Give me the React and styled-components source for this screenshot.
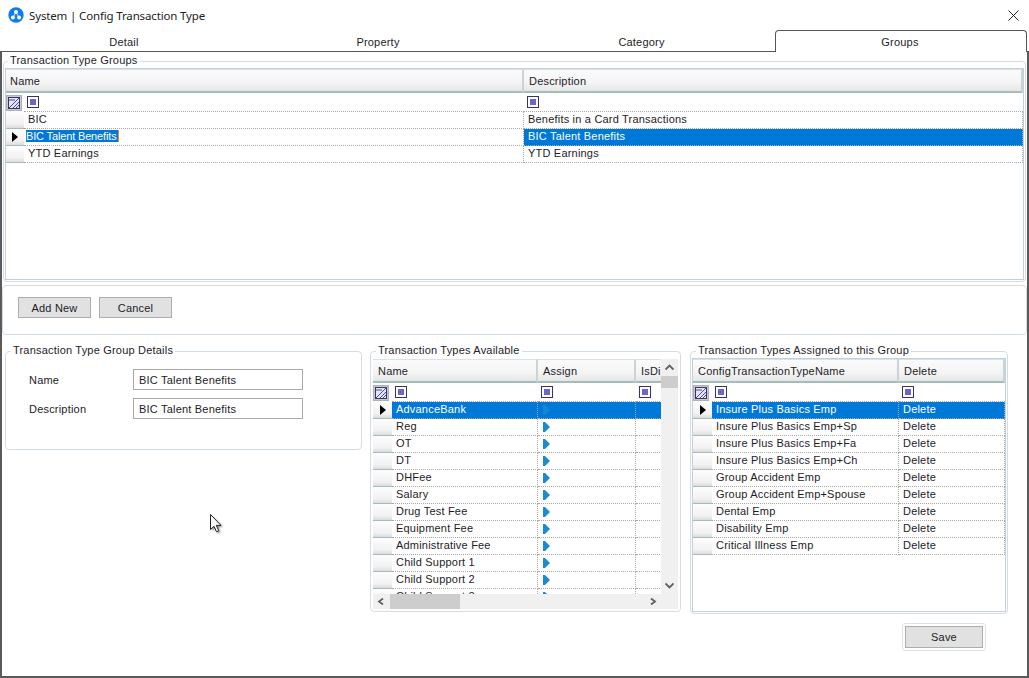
import React from "react";
import styled, { createGlobalStyle } from "styled-components";

const Global = createGlobalStyle`
  html, body { margin: 0; padding: 0; background: #fff; }
  * { box-sizing: border-box; }
  #root { width: 1029px; height: 678px; overflow: hidden; }
`;

const Page = styled.div`
  position: relative;
  width: 1029px;
  height: 678px;
  display: flex;
  flex-direction: column;
  background: #fff;
  overflow: hidden;
  font-family: "Liberation Sans", Arial, sans-serif;
  font-size: 11px;
  letter-spacing: 0.2px;
  color: #1c1c28;
`;
const TitleBar = styled.div`
  height: 30px;
  flex: none;
  display: flex;
  align-items: center;
  padding: 0 10px 0 8px;
  gap: 5px;
`;
const TitleText = styled.span`
  flex: 1;
  font-family: "Noto Sans", sans-serif;
  font-size: 11.5px;
  letter-spacing: -0.15px;
  color: #222;
`;
const TabStrip = styled.div`
  height: 22px;
  flex: none;
  display: grid;
  grid-template-columns: 248px 260px 267px 252px 2px;
`;
const Tab = styled.div`
  display: flex;
  align-items: center;
  justify-content: center;
  padding: ${(p) => (p.$active ? "0 2px 0 0" : "2px 0 0 0")};
  border-bottom: ${(p) => (p.$active ? "none" : "1.5px solid #555")};
  ${(p) =>
    p.$active &&
    `border: 1px solid #555; border-bottom: none; border-radius: 4px 4px 0 0; background:#fff;`}
`;
const TabEnd = styled.div`
  border-bottom: 1.5px solid #555;
`;
const Body = styled.div`
  flex: 1;
  display: flex;
  flex-direction: column;
  border-left: 2px solid #5a5a5a;
  border-right: 2px solid #5a5a5a;
  border-bottom: 2px solid #5a5a5a;
  padding-top: 9px;
`;
const Field = styled.div`
  position: relative;
  flex: none;
  width: ${(p) => p.$w};
  height: ${(p) => p.$h};
  margin: ${(p) => p.$m || 0};
  padding: ${(p) => p.$p || "6px 1px 1px 1px"};
  border: 1.5px solid #d3dde5;
  border-radius: 4px;
  display: flex;
`;
const Legend = styled.span`
  position: absolute;
  left: ${(p) => p.$left || "5px"};
  top: -8px;
  padding: 0 2px 0 2px;
  background: #fff;
  line-height: 13px;
  white-space: nowrap;
`;
const ButtonBar = styled.div`
  flex: none;
  height: 50px;
  margin-top: 3px;
  padding: 11px 0 0 15px;
  display: flex;
  gap: 8px;
  border: 1.5px solid #d3dde5;
  border-radius: 4px;
  align-items: flex-start;
`;
const Btn = styled.button`
  width: 73px;
  height: 21px;
  padding: 0;
  background: #e1e1e1;
  border: 1px solid #adadad;
  font: inherit;
  letter-spacing: inherit;
  color: inherit;
`;
const Lower = styled.div`
  display: flex;
  flex: none;
  margin-top: 16px;
  padding-left: 3px;
  gap: 8px;
  align-items: flex-start;
`;
const RightColumn = styled.div`
  display: flex;
  flex-direction: column;
  align-items: flex-end;
  margin-left: 1px;
`;
const SaveFrame = styled.div`
  margin: 9px 22px 0 0;
  padding: 2px;
  border: 1.5px solid #dbe3ea;
  border-radius: 3px;
`;
const SaveBtn = styled(Btn)`
  display: block;
  width: 78px;
  height: 22px;
`;
const Form = styled.div`
  display: grid;
  grid-template-columns: 104px 170px;
  grid-auto-rows: 21px;
  row-gap: 8px;
  padding: 17px 0 0 23px;
  align-items: center;
`;
const TextBox = styled.div`
  height: 21px;
  border: 1px solid #a9a9a9;
  padding-left: 5px;
  display: flex;
  align-items: center;
`;

const GridFrame = styled.div`
  flex: 1;
  min-width: 0;
  display: flex;
  border: 1px solid ${(p) => (p.$plain ? "#c2d0da" : "transparent")};
  overflow: hidden;
`;
const GridMain = styled.div`
  flex: 1;
  min-width: 0;
  display: flex;
  flex-direction: column;
`;
const Viewport = styled.div`
  flex: 1;
  min-height: 0;
  overflow: hidden;
`;
const Row = styled.div`
  display: grid;
  grid-template-columns: ${(p) => p.$cols};
  height: ${(p) => p.$h || "17px"};
`;
const HeaderCell = styled.div`
  grid-column: ${(p) => (p.$span ? "span 2" : "auto")};
  display: flex;
  align-items: center;
  padding-left: ${(p) => p.$pad || "5px"};
  overflow: hidden;
  white-space: nowrap;
  background: linear-gradient(#fbfbfb, #f4f4f4 60%, #e6e6e6);
  border-top: 1px solid #d9e2e6;
  border-bottom: 2px solid #a3bcbc;
  border-right: 2px solid #c9d4d6;
`;
const Selector = styled.div`
  display: flex;
  align-items: center;
  justify-content: center;
  background: linear-gradient(#fdfdfd, #f1f1f1 75%, #dcdcdc);
  border-bottom: 1px solid #a3bcbc;
`;
const CornerCell = styled.div`
  display: flex;
  align-items: center;
  justify-content: flex-start;
`;
const Cell = styled.div`
  display: flex;
  align-items: center;
  padding: 0 0 3px 4px;
  overflow: hidden;
  white-space: nowrap;
  border-bottom: 1px dotted #a8a8a8;
  border-right: 1px dotted #a8a8a8;
  background: ${(p) => (p.$selected ? "#0078d7" : "#fff")};
  color: ${(p) => (p.$selected ? "#fff" : "inherit")};
`;
const EditText = styled.span`
  background: #0078d7;
  color: #fff;
  padding: 0 1px 0 0;
  margin-left: -2px;
  letter-spacing: -0.15px;
  border-right: 1px solid #e08a3c;
`;
const FilterCell = styled.div`
  display: flex;
  align-items: center;
  padding-left: 3px;
  border-bottom: 1px dotted #a8a8a8;
  background: #fff;
`;
const FilterBox = styled.span`
  width: 12px;
  height: 12px;
  border: 1px solid #33336e;
  display: flex;
  align-items: center;
  justify-content: center;
  &::after {
    content: "";
    width: 6px;
    height: 6px;
    background: #6b66cc;
  }
`;
const VScroll = styled.div`
  flex: none;
  width: 17px;
  background: #f0f0f0;
  display: flex;
  flex-direction: column;
  align-items: center;
  padding-bottom: 15px;
`;
const VThumb = styled.div`
  width: 100%;
  height: 12px;
  background: #cdcdcd;
`;
const Spacer = styled.div`
  flex: 1;
`;
const HScroll = styled.div`
  flex: none;
  height: 15px;
  background: #f0f0f0;
  display: flex;
  align-items: center;
`;
const HThumb = styled.div`
  width: 70px;
  height: 100%;
  background: #cdcdcd;
`;
const ArrowBox = styled.div`
  flex: none;
  height: 17px;
  width: 17px;
  display: flex;
  align-items: center;
  justify-content: center;
`;
const AssignSvg = styled.svg`
  margin: 3px 0 0 1px;
`;
const Cursor = styled.svg`
  position: absolute;
  left: 209px;
  top: 513px;
`;

const Logo = () => (
  <svg width="16" height="16" viewBox="0 0 16 16">
    <circle cx="8" cy="8" r="7.7" fill="#0e7ceb" />
    <circle cx="8" cy="5" r="2" fill="#fff" />
    <circle cx="4.9" cy="10.6" r="2" fill="#fff" />
    <circle cx="11.1" cy="10.6" r="2" fill="#fff" />
    <path d="M8 5L5 10.600M8 5l3 5.600" stroke="#fff" strokeWidth="0.8" />
  </svg>
);
const CloseIcon = () => (
  <svg width="11" height="11" viewBox="0 0 11 11">
    <path d="M.5.5l10 10M10.5.5l-10 10" stroke="#222" strokeWidth="1" fill="none" />
  </svg>
);
const FilterIcon = () => (
  <svg width="16" height="16" viewBox="0 0 16 16">
    <rect x=".75" y=".75" width="14.5" height="14.500" fill="#e4e4ee" stroke="#b0b0b0" strokeWidth="1.5" />
    <rect x="2.500" y="2.500" width="11" height="11" fill="#e6e6f6" stroke="#33336e" />
    <path d="M3 13L13 3M7 13l6-6M10 13l3-3M3 5h6" stroke="#4a4a9a" fill="none" />
  </svg>
);
const RowArrow = () => (
  <svg width="6" height="10" viewBox="0 0 6 10">
    <path d="M0 0l6 5-6 5z" fill="#000" />
  </svg>
);
const AssignArrow = ({ dim }) => (
  <AssignSvg width="7" height="10" viewBox="0 0 7 10">
    <path d="M0 0h2l5 5-5 5H0z" fill={dim ? "#1488cf" : "#1a8ccb"} />
  </AssignSvg>
);
const Chevron = ({ d }) => (
  <svg width="9" height="7" viewBox="0 0 9 7">
    <path d={d} stroke="#606060" strokeWidth="1.8" fill="none" />
  </svg>
);

function DataGrid({ cols, headers, rows, selected, edit, filters, firstPad, headH = "24px", filterH = "19px" }) {
  return (
    <Viewport>
      <Row $cols={cols} $h={headH}>
        {headers.map((h, i) => (
          <HeaderCell key={h} $span={i === 0} $pad={i === 0 ? firstPad : undefined}>
            {h}
          </HeaderCell>
        ))}
      </Row>
      <Row $cols={cols} $h={filterH}>
        <CornerCell>
          <FilterIcon />
        </CornerCell>
        {filters.map((f) => (
          <FilterCell key={f}>
            <FilterBox />
          </FilterCell>
        ))}
      </Row>
      {rows.map((r, i) => (
        <Row $cols={cols} key={r[0] + i}>
          <Selector>{i === selected && <RowArrow />}</Selector>
          {r.map((c, j) => {
            const isSel = i === selected && !(edit && j === 0);
            return (
              <Cell key={j} $selected={isSel}>
                {c === ">" ? (
                  <AssignArrow dim={isSel} />
                ) : i === selected && edit && j === 0 ? (
                  <EditText>{c}</EditText>
                ) : (
                  c
                )}
              </Cell>
            );
          })}
        </Row>
      ))}
    </Viewport>
  );
}

const groups = [
  ["BIC", "Benefits in a Card Transactions"],
  ["BIC Talent Benefits", "BIC Talent Benefits"],
  ["YTD Earnings", "YTD Earnings"],
];
const available = [
  "AdvanceBank", "Reg", "OT", "DT", "DHFee", "Salary", "Drug Test Fee", "Equipment Fee",
  "Administrative Fee", "Child Support 1", "Child Support 2", "Child Support 3",
].map((n) => [n, ">", ""]);
const assigned = [
  "Insure Plus Basics Emp", "Insure Plus Basics Emp+Sp", "Insure Plus Basics Emp+Fa",
  "Insure Plus Basics Emp+Ch", "Group Accident Emp", "Group Accident Emp+Spouse",
  "Dental Emp", "Disability Emp", "Critical Illness Emp",
].map((n) => [n, "Delete"]);

export default function App() {
  return (
    <Page>
      <Global />
      <TitleBar>
        <Logo />
        <TitleText>System | Config Transaction Type</TitleText>
        <CloseIcon />
      </TitleBar>
      <TabStrip>
        <Tab>Detail</Tab>
        <Tab>Property</Tab>
        <Tab>Category</Tab>
        <Tab $active>Groups</Tab>
        <TabEnd />
      </TabStrip>
      <Body>
        <Field $w="1023px" $h="221px" $m="0 0 0 1px">
          <Legend $left="4px">Transaction Type Groups</Legend>
          <GridFrame $plain>
            <GridMain>
              <DataGrid
                cols="18px 500px 1fr"
                headers={["Name", "Description"]}
                filters={["a", "b"]}
                rows={groups}
                selected={1}
                firstPad="4px"
                edit
              />
            </GridMain>
          </GridFrame>
        </Field>
        <ButtonBar>
          <Btn>Add New</Btn>
          <Btn>Cancel</Btn>
        </ButtonBar>
        <Lower>
          <Field $w="357px" $h="99px" $p="0">
            <Legend>Transaction Type Group Details</Legend>
            <Form>
              <span>Name</span>
              <TextBox>BIC Talent Benefits</TextBox>
              <span>Description</span>
              <TextBox>BIC Talent Benefits</TextBox>
            </Form>
          </Field>
          <Field $w="311px" $h="261px">
            <Legend>Transaction Types Available</Legend>
            <GridFrame>
              <GridMain>
                <DataGrid
                  cols="19px 146px 98px 28px"
                  headers={["Name", "Assign", "IsDisabled"]}
                  filters={["a", "b", "c"]}
                  rows={available}
                  selected={0}
                />
                <HScroll>
                  <ArrowBox>
                    <Chevron d="M6 .5L2 3.500l4 3" />
                  </ArrowBox>
                  <HThumb />
                  <Spacer />
                  <ArrowBox>
                    <Chevron d="M3 .5l4 3-4 3" />
                  </ArrowBox>
                </HScroll>
              </GridMain>
              <VScroll>
                <ArrowBox>
                  <Chevron d="M.5 5.500l4-4 4 4" />
                </ArrowBox>
                <VThumb />
                <Spacer />
                <ArrowBox>
                  <Chevron d="M.5 1.500l4 4 4-4" />
                </ArrowBox>
              </VScroll>
            </GridFrame>
          </Field>
          <RightColumn>
            <Field $w="318px" $h="263px">
              <Legend>Transaction Types Assigned to this Group</Legend>
              <GridFrame $plain>
                <GridMain>
                  <DataGrid
                    cols="19px 187px 1fr"
                    headers={["ConfigTransactionTypeName", "Delete"]}
                    filters={["a", "b"]}
                    rows={assigned}
                    selected={0}
                  />
                </GridMain>
              </GridFrame>
            </Field>
            <SaveFrame>
              <SaveBtn>Save</SaveBtn>
            </SaveFrame>
          </RightColumn>
        </Lower>
      </Body>
      <Cursor width="16" height="24" viewBox="0 0 16 24">
        <defs>
          <filter id="s" x="-30%" y="-30%" width="180%" height="180%">
            <feGaussianBlur stdDeviation="1.2" />
          </filter>
        </defs>
        <path d="M3 3v15l3.500-3 2.500 5.500 2.500-1-2.500-5.500h5z" fill="#888" filter="url(#s)" />
        <path d="M1.500 1.500v15l3.500-3.200 2.500 5.500 2.300-1-2.500-5.400h4.700z" fill="#fff" stroke="#222" strokeWidth="1" />
      </Cursor>
    </Page>
  );
}
